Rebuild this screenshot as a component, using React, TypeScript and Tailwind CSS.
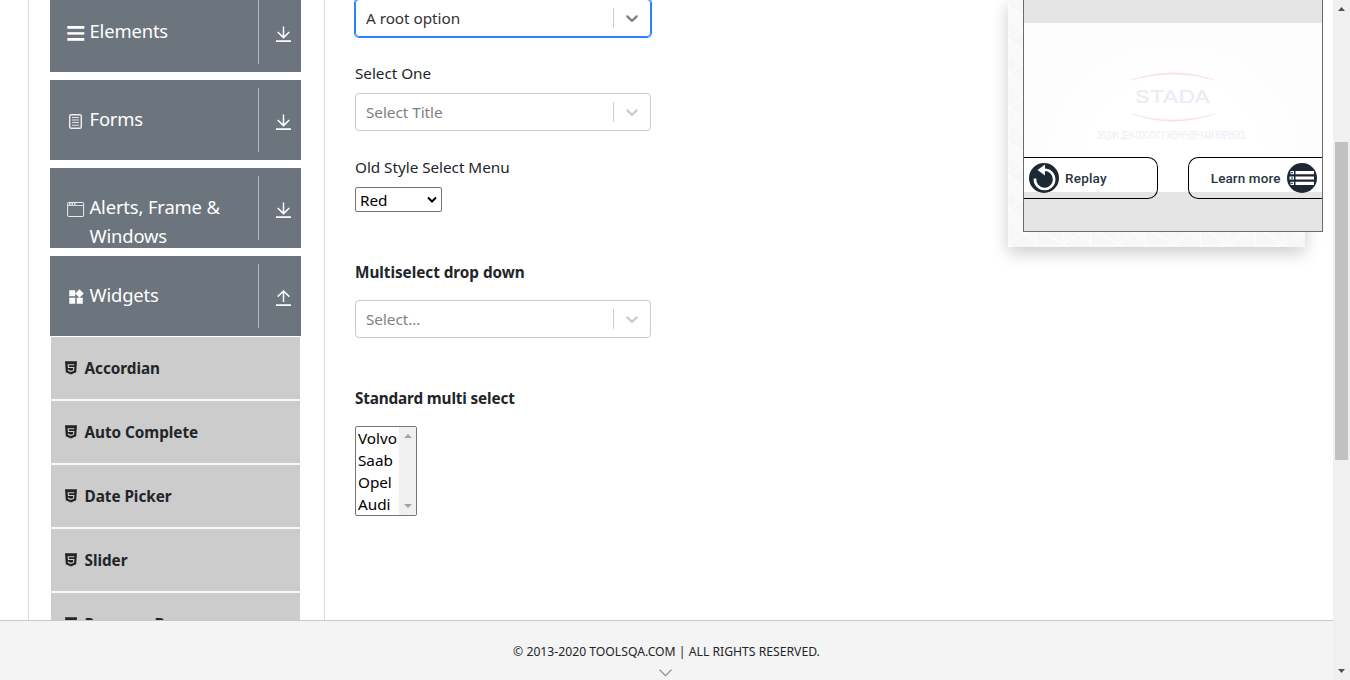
import React from "react";
import { MdWidgets } from "react-icons/md";

function ListIcon() {
  return (
    <svg width="18" height="18" viewBox="0 0 18 18" fill="#fff">
      <rect x="0.3" y="2" width="17" height="2.8" />
      <rect x="0.3" y="8.2" width="17" height="2.4" />
      <rect x="0.3" y="14" width="17" height="2.8" />
    </svg>
  );
}

function FormIcon() {
  return (
    <svg width="18" height="18" viewBox="0 0 18 18" fill="none" stroke="#fff">
      <rect x="2.7" y="2.7" width="11.6" height="13.6" rx="1.6" strokeWidth="1.4" opacity="0.9" />
      <path d="M5 5.500h7M5 8h7M5 10.500h7M5 13.200h7" strokeWidth="1" opacity="0.8" />
    </svg>
  );
}

function WindowIcon() {
  return (
    <svg width="18" height="18" viewBox="0 0 18 18" fill="none" stroke="#fff">
      <rect x="0.6" y="2.5" width="16" height="14" rx="0.8" opacity="0.85" />
      <path d="M1 5.500h15.500" opacity="0.7" />
      <path d="M2 4h1.500M4.500 4H6M7 4h1.500" strokeWidth="1.3" />
    </svg>
  );
}

function WidgetIcon() {
  return <MdWidgets size={18} color="#fff" />;
}

function ToggleIcon({ open }: { open: boolean }) {
  return (
    <svg width="16" height="18" viewBox="0 0 16 18" fill="none" stroke="#fff">
      <path d={open ? "M7.500 13V2.200M1.700 7.600L7.500 2l5.800 5.600" : "M7.500 1.500V12.600M1.700 7L7.500 12.600L13.300 7"} strokeWidth="1.5" />
      <path d="M0 16.100h15" strokeWidth="1.7" />
    </svg>
  );
}

function Html5Icon() {
  return (
    <svg width="12" height="14" viewBox="0 0 12 14" className="shrink-0">
      <path d="M0 0.300h12l-0.800 11L6 13.600l-5.200-2.300z" fill="#212529" />
      <path d="M9.300 3.700H3.200l.3 2.800h5.300l-.3 2.900L6 10.300 3.500 9.500l-.1-1" fill="none" stroke="#ccc" strokeWidth="1.100" />
    </svg>
  );
}

const groups = [
  { label: "Elements", icon: ListIcon, open: false },
  { label: "Forms", icon: FormIcon, open: false },
  { label: "Alerts, Frame & Windows", icon: WindowIcon, open: false },
  { label: "Widgets", icon: WidgetIcon, open: true },
];

const items = ["Accordian", "Auto Complete", "Date Picker", "Slider", "Progress Bar"];

function Sidebar() {
  return (
    <aside className="ml-[28px] h-[620px] w-[297px] shrink-0 overflow-hidden border-x border-[#dcdcdc] pl-[21px]">
      <div className="-mt-2 flex w-[251px] flex-col gap-2">
        {groups.map(({ label, icon: Icon, open }) => (
          <div key={label} className="flex h-20 overflow-hidden bg-[#6c757d] text-white">
            <div className="flex w-[208px] pt-6 pl-[17px]">
              <span className="mt-2 w-[22.5px] shrink-0">
                <Icon />
              </span>
              <span className="w-[150px] text-[18.4px] leading-[29px] tracking-[-0.15px]">{label}</span>
            </div>
            <div className="mt-2 flex h-16 w-[43px] border-l border-[#b5babe] pt-[25px] pl-[17px]">
              <ToggleIcon open={open} />
            </div>
          </div>
        ))}
      </div>
      <ul className="mt-px ml-px flex w-[249px] flex-col gap-0.5 bg-[#f8f8f8]">
        {items.map((item) => (
          <li key={item} className="flex h-[62px] items-center gap-[7.5px] bg-[#ccc] pl-[14px] text-[15.3px] font-bold tracking-[-0.04px]">
            <Html5Icon />
            <span>{item}</span>
          </li>
        ))}
      </ul>
    </aside>
  );
}

function SelectBox({ text, active = false }: { text: string; active?: boolean }) {
  return (
    <div
      className={
        active
          ? "flex h-[38px] w-[296px] items-center rounded border border-[#2684ff] pl-[10px] text-[#333] shadow-[0_0_0_1px_#2684ff]"
          : "flex h-[38px] w-[296px] items-center rounded border border-[#ccc] pl-[10px] text-[#808080]"
      }
    >
      <span className="flex-1">{text}</span>
      <span className="h-5 w-px bg-[#ccc]" />
      <span className="flex w-9 justify-center">
        <svg width="20" height="20" viewBox="0 0 20 20" fill={active ? "#808080" : "#ccc"}>
          <path d="M4.516 7.548c0.436-0.446 1.043-0.481 1.576 0l3.908 3.747 3.908-3.747c0.533-0.481 1.141-0.446 1.574 0 0.436 0.445 0.408 1.197 0 1.615-0.406 0.418-4.695 4.502-4.695 4.502-0.217 0.223-0.502 0.335-0.787 0.335s-0.570-0.112-0.789-0.335c0 0-4.287-4.084-4.695-4.502s-0.436-1.170 0-1.615z" />
        </svg>
      </span>
    </div>
  );
}

function Form() {
  return (
    <main className="w-[683px] shrink-0 pl-[30px] text-[15.3px] leading-6 tracking-[-0.04px]">
      <div className="-mt-px">
        <SelectBox text="A root option" active />
      </div>
      <p className="mt-6 mb-2">Select One</p>
      <SelectBox text="Select Title" />
      <p className="mt-6 mb-2">Old Style Select Menu</p>
      <div className="flex h-[25px] w-[87px] items-center justify-between rounded-[2px] border border-[#767676] pr-1 pl-1 text-black">
        <span>Red</span>
        <svg width="10" height="8" viewBox="0 0 10 8" fill="none" stroke="#000" strokeWidth="2">
          <path d="M1 1.500l4 4 4-4" />
        </svg>
      </div>
      <p className="mt-12 mb-4 font-bold">Multiselect drop down</p>
      <SelectBox text="Select..." />
      <p className="mt-12 mb-4 font-bold tracking-[-0.15px]">Standard multi select</p>
      <div className="flex h-[90px] w-[62px] rounded-[2px] border border-[#767676] text-black">
        <ul className="flex-1 overflow-hidden pl-[2px] leading-[22px]">
          <li>Volvo</li>
          <li>Saab</li>
          <li>Opel</li>
          <li>Audi</li>
        </ul>
        <div className="flex w-[17px] flex-col items-center justify-between bg-[#f0f0f0] pt-[7px] pb-[7px]">
          <svg width="8" height="4" viewBox="0 0 8 4" fill="#a3a3a3">
            <path d="M0 4l4-4 4 4z" />
          </svg>
          <svg width="8" height="4" viewBox="0 0 8 4" fill="#a3a3a3">
            <path d="M0 0l4 4 4-4z" />
          </svg>
        </div>
      </div>
    </main>
  );
}

function Ad() {
  return (
    <section className="relative h-[247px] w-[297px] shrink-0 bg-[#f7f7f7] pl-[15px] shadow-[0_6px_16px_rgba(0,0,0,0.2)]">
      <svg className="absolute inset-0" width="297" height="247" fill="none" stroke="#fdfdfd" strokeWidth="1.2">
        <defs>
          <pattern id="tri" y="6" width="55" height="34" patternUnits="userSpaceOnUse">
            <path d="M0 0L27.500 17L55 0L27.500 0V34L0 17V0z" fill="#f9f9f9" stroke="none" />
            <path d="M0 0L55 34M55 0L0 34M27.500 0V34M0 0V34" />
          </pattern>
        </defs>
        <rect width="297" height="247" fill="url(#tri)" stroke="none" />
      </svg>
      <div className="relative flex h-[232px] w-[300px] flex-col border-x border-b border-[#6b6b6b] bg-[#e5e5e5]">
        <div className="mt-[23px] h-[169px] bg-[radial-gradient(ellipse_at_50%_80%,#fff_40%,#fcfcfc_75%)] pt-[48px]">
          <svg className="mx-auto block" width="156" height="72" viewBox="0 0 156 72">
            <path d="M36 9Q78-5.500 120 9Q78-3 36 9M36 43Q78 57.500 120 43Q78 55 36 43" fill="#f5dbe3" stroke="#f9e6ec" strokeWidth="0.600" />
            <text x="40" y="31.500" fontFamily="Inter, Liberation Sans, sans-serif" fontSize="17" textLength="75" lengthAdjust="spacingAndGlyphs" fill="#e7edf4" stroke="#e7edf4" strokeWidth="0.200">STADA</text>
            <text x="2" y="67.500" fontFamily="Liberation Sans, sans-serif" fontSize="10" textLength="149" lengthAdjust="spacingAndGlyphs" fill="#e9eef4">ЭЛДИН ДЕН-СООЛУГУ ЖӨНҮНДӨ КАМ КӨРӨБҮЗ.</text>
          </svg>
        </div>
        <div className="-mt-[35px] flex h-[42px] justify-between font-['Roboto',sans-serif] text-[13.5px] font-medium text-[#2a3540]">
          <div className="flex w-[134px] items-center gap-[6px] rounded-r-[10px] border border-l-0 border-black bg-[linear-gradient(#fff_34px,#e5e5e5_34px)] pl-[5px] tracking-[0.2px]">
            <svg width="30" height="30" viewBox="0 0 30 30">
              <circle cx="15" cy="15" r="15" fill="#1c2833" />
              <path d="M15.500 6.800A9.600 9.600 0 1 1 6 15.500" fill="none" stroke="#fff" strokeWidth="2.600" />
              <path d="M16 1.500v11L8.500 7z" fill="#fff" />
            </svg>
            <span>Replay</span>
          </div>
          <div className="flex w-[134px] items-center justify-end gap-[6.5px] rounded-l-[10px] border border-r-0 border-black bg-[linear-gradient(#fff_34px,#e5e5e5_34px)] pr-[5px] tracking-[0.1px]">
            <span>Learn more</span>
            <svg width="30" height="30" viewBox="0 0 30 30">
              <circle cx="15" cy="15" r="15" fill="#1c2833" />
              <path d="M8.500 9.700h18.500M8.500 15h18.500M8.500 20.300h18.500" stroke="#fff" strokeWidth="3.200" />
              <path d="M3.500 9.700h3.500M2.500 15h4.500M3.500 20.300h3.500" stroke="#fff" strokeWidth="3.200" />
              <path d="M4 9.700h2M4 15h2M4 20.300h2" stroke="#1c2833" strokeWidth="1" />
            </svg>
          </div>
        </div>
      </div>
    </section>
  );
}

function Scrollbar() {
  return (
    <div className="flex h-[680px] w-[17px] shrink-0 flex-col items-center bg-[#f0f0f0] pt-[7px] pb-[7px]">
      <svg width="7" height="4" viewBox="0 0 7 4" fill="#505050">
        <path d="M0 4l3.500-4 3.500 4z" />
      </svg>
      <div className="mt-[131px] h-[318px] w-[13px] bg-[#c1c1c1]" />
      <div className="flex-1" />
      <svg width="7" height="4" viewBox="0 0 7 4" fill="#505050">
        <path d="M0 0l3.500 4 3.500-4z" />
      </svg>
    </div>
  );
}

export default function App() {
  return (
    <div className="flex h-[680px] w-[1350px] overflow-hidden bg-white font-['Noto_Sans','Open_Sans',sans-serif] text-[#212529]">
      <div className="flex w-[1333px] flex-col">
        <div className="flex h-[620px] overflow-hidden">
          <Sidebar />
          <Form />
          <Ad />
        </div>
        <footer className="flex h-[60px] flex-col items-center border-t border-[#c8c8c8] bg-[#f4f4f4] pt-[21px]">
          <span className="text-[12.2px] leading-5">© 2013-2020 TOOLSQA.COM | ALL RIGHTS RESERVED.</span>
          <svg className="mt-[7px] mr-[2px]" width="13" height="8" viewBox="0 0 13 8" fill="none" stroke="#888" strokeWidth="1.2">
            <path d="M0.500 0.700l6 6 6-6" />
          </svg>
        </footer>
      </div>
      <Scrollbar />
    </div>
  );
}
